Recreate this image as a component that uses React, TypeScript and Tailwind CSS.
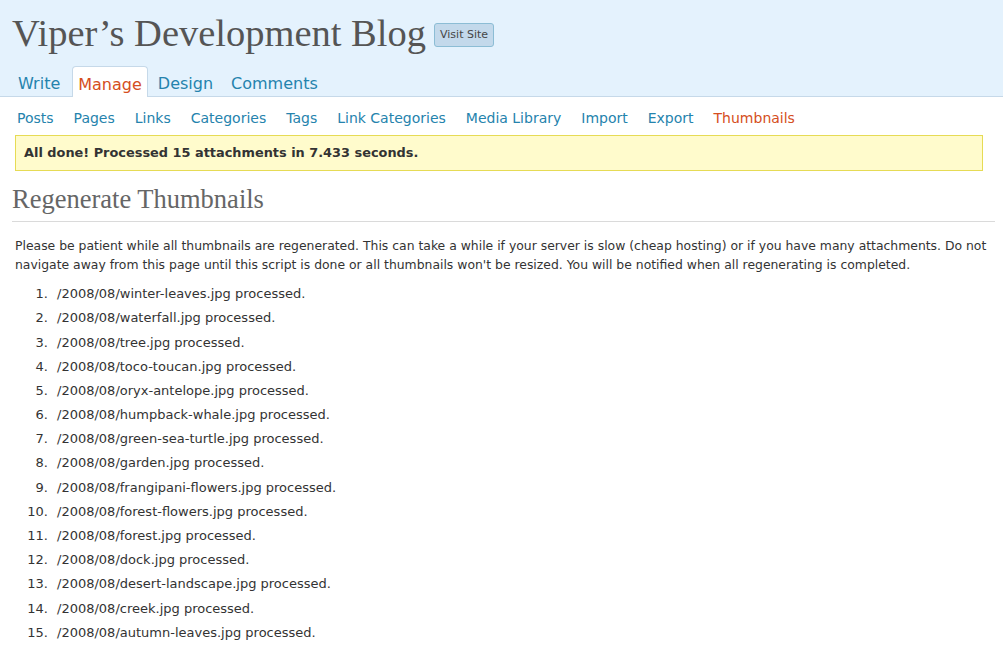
const files = [
  'winter-leaves',
  'waterfall',
  'tree',
  'toco-toucan',
  'oryx-antelope',
  'humpback-whale',
  'green-sea-turtle',
  'garden',
  'frangipani-flowers',
  'forest-flowers',
  'forest',
  'dock',
  'desert-landscape',
  'creek',
  'autumn-leaves',
];

const subMenu = ['Posts', 'Pages', 'Links', 'Categories', 'Tags', 'Link Categories', 'Media Library', 'Import', 'Export'];

export default function App() {
  return (
    <div className="min-h-screen bg-white text-[#333] font-['DejaVu_Sans',sans-serif]">
      <div className="bg-[#e4f2fd] border-b border-[#c6d9e9]">
        <div className="flex items-center pl-3 pt-[9px] h-[57px]">
          <h1 className="font-['Liberation_Serif',serif] text-[38.5px] text-[#555] leading-none">Viper’s Development Blog</h1>
          <span className="ml-[8px] mt-[4px] px-[5px] h-[24px] flex items-center rounded-[3px] border border-[#8cbdd5] bg-[#c3d9eb] text-[11px] text-[#464646]">
            Visit Site
          </span>
        </div>
        <div className="flex items-end pl-[9px] h-[31px] text-[16px] leading-none mt-[8px]">
          <span className="px-[9px] pb-[4px] text-[#2583ad]">Write</span>
          <span className="ml-[3px] px-[5px] pb-[4px] h-[31px] -mb-px flex items-end bg-white border border-b-0 border-[#c6d9e9] rounded-t-[4px] text-[#d54e21]">
            Manage
          </span>
          <span className="ml-[10px] pb-[4px] text-[#2583ad]">Design</span>
          <span className="ml-[18px] pb-[4px] text-[#2583ad]">Comments</span>
        </div>
      </div>

      <div className="flex pl-[17px] pt-[11px] gap-x-[20px] text-[14px] text-[#2583ad]">
        {subMenu.map((s) => (
          <span key={s}>{s}</span>
        ))}
        <span className="text-[#d54e21]">Thumbnails</span>
      </div>

      <div className="mx-[15px] mt-[6px] mr-[20px] h-[36px] flex items-center px-[8px] bg-[#fffbcc] border border-[#e6db55] text-[12.9px] font-bold text-[#333]">
        All done! Processed 15 attachments in 7.433 seconds.
      </div>

      <div className="ml-[12px] mr-[8px]">
        <h2 className="font-['Liberation_Serif',serif] text-[26.5px] text-[#666] pt-[12px] pb-[5px] border-b border-[#dadada] leading-tight">
          Regenerate Thumbnails
        </h2>
        <p className="text-[12.4px] leading-[19px] mt-[14px] pl-[3px]">
          Please be patient while all thumbnails are regenerated. This can take a while if your server is slow (cheap hosting) or if you have many attachments. Do not navigate away from this page until this script is done or all thumbnails won't be resized. You will be notified when all regenerating is completed.
        </p>
        <ol className="mt-[10px] text-[13px] flex flex-col gap-y-[5.2px]">
          {files.map((f, i) => (
            <li key={f} className="flex leading-[19px]">
              <span className="w-[36px] text-right">{i + 1}.</span>
              <span className="ml-[9px]">/2008/08/{f}.jpg processed.</span>
            </li>
          ))}
        </ol>
      </div>
    </div>
  );
}
